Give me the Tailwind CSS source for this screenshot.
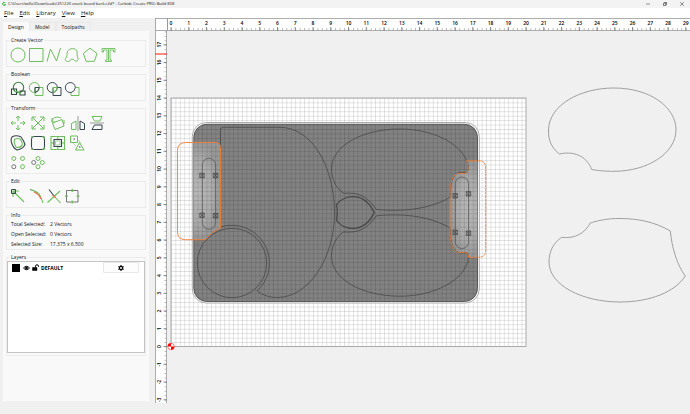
<!DOCTYPE html>
<html lang="en">
<head>
<meta charset="utf-8">
<title>Carbide Create PRO</title>
<script src="https://cdn.jsdelivr.net/npm/@tailwindcss/browser@4"></script>
</head>
<body class="flex h-screen flex-col overflow-hidden bg-[#f0f0f0] font-['Open_Sans',sans-serif] text-[5px] leading-[8px] font-medium text-[#111]">
<header>
  <div class="flex h-[8px] items-center bg-[#f3f3f3] pl-[2px] pr-[6px] text-[4px]">
    <svg class="mr-[2px] size-[4px]" viewBox="0 0 8 8" fill="none" stroke="#35b135" stroke-width="2"><path d="M6.5 1.8A3 3 0 1 0 7 5H4.5"/></svg>
    <h1 class="grow">C:\Users\willa\Downloads\251220 snack board back.c2d* - Carbide Create PRO: Build 838</h1>
    <div class="flex gap-[13px]">
      <button aria-label="Minimize"><svg class="size-[4px]" viewBox="0 0 4 4" stroke="#555" stroke-width=".6"><path d="M0 2h4"/></svg></button>
      <button aria-label="Restore"><svg class="size-[4px]" viewBox="0 0 4 4" fill="none" stroke="#222" stroke-width=".6"><path d="M.4 1.2h2.4v2.4H.4zM1.2.4h2.4v2.4"/></svg></button>
      <button aria-label="Close"><svg class="size-[4px]" viewBox="0 0 4 4" stroke="#444" stroke-width=".6"><path d="M.2.2l3.6 3.6M3.8.2L.2 3.8"/></svg></button>
    </div>
  </div>
  <nav class="flex h-[10px] items-center gap-[6px] bg-white pl-[4px] text-[6px]">
    <button><u>F</u>ile</button><button><u>E</u>dit</button><button><u>L</u>ibrary</button><button><u>V</u>iew</button><button><u>H</u>elp</button>
  </nav>
</header>

<main class="flex min-h-0 grow">
  <aside class="flex w-[152px] shrink-0 flex-col pt-[4px] pr-[3px] pb-[13px] pl-[3px]">
    <div role="tablist" class="flex h-[9px]">
      <button role="tab" aria-selected="true" class="bg-[#f9f9f9] px-[5px]">Design</button>
      <button role="tab" class="border-x border-t border-[#e9e9e9] px-[5px]">Model</button>
      <button role="tab" class="border-x border-t border-[#e9e9e9] px-[5px]">Toolpaths</button>
    </div>
    <div class="flex grow flex-col gap-[3px] bg-[#f9f9f9] px-[3px] pt-[5px]">
      <fieldset class="border border-[#ebebeb] px-[3px] pb-[3px]">
        <legend class="px-px">Create Vector</legend>
        <div class="flex gap-[2px] pt-[3px]">
          <button aria-label="Circle"><svg class="size-4" viewBox="0 0 16 16" fill="none" stroke="#6cbf5c"><circle cx="8" cy="8" r="7"/></svg></button>
          <button aria-label="Rectangle"><svg class="size-4" viewBox="0 0 16 16" fill="none" stroke="#6cbf5c"><path d="M1.500 1.500h13.500v13h-13.500z"/></svg></button>
          <button aria-label="Polyline"><svg class="size-4" viewBox="0 0 16 16" fill="none" stroke="#6cbf5c"><path d="M1 14.500L4.500 2l6 12L14.500 1"/></svg></button>
          <button aria-label="Curve"><svg class="size-4" viewBox="0 0 16 16" fill="none" stroke="#6cbf5c"><path d="M3.500 14.500C0 14 1.500 11.500 2.500 10C3.500 8 2.500 7 3.500 4.500C5 .800 12 .500 13 4.500C13.500 7 12.500 8.500 14 11C15 13.500 12 15 10.500 13.500C9 11.500 7 12 6.500 13C6 14.300 5 14.600 3.500 14.500z"/></svg></button>
          <button aria-label="Polygon"><svg class="size-4" viewBox="0 0 16 16" fill="none" stroke="#6cbf5c"><path d="M8 1.200L15 6.500L12.400 14.300H4.200L1.300 6.500z"/></svg></button>
          <button aria-label="Text"><svg class="size-4" viewBox="0 0 16 16" fill="none" stroke="#6cbf5c" stroke-width=".9"><path d="M2 1.500H15V5H13.500V3H10V13H11.500V14.500H5.500V13H7V3H3.500V5H2zM8.500 2V14"/></svg></button>
        </div>
      </fieldset>
      <fieldset class="border border-[#ebebeb] px-[3px] pb-[3px]">
        <legend class="px-px">Boolean</legend>
        <div class="flex gap-[2px] pt-[3px]">
          <button aria-label="Union"><svg class="size-4" viewBox="0 0 16 16" fill="none" stroke="#3a7d43" stroke-width="1.100"><circle cx="8.500" cy="6.500" r="5.200"/><path d="M1.500 8h5v5.500h-5zM10 10h5v4h-5z" stroke="#2e4a3c"/><path d="M4 10.500h4L11 13" stroke="#6cbf5c"/></svg></button>
          <button aria-label="Subtract"><svg class="size-4" viewBox="0 0 16 16" fill="none" stroke="#6cbf5c"><circle cx="6.300" cy="6.500" r="5"/><path d="M7 6.500h8v8h-8z"/><path d="M7 11.500V6.500h4.300Q11 10.500 7 11.500" stroke="#37474f"/></svg></button>
          <button aria-label="Intersect"><svg class="size-4" viewBox="0 0 16 16" fill="none" stroke="#37474f"><circle cx="6.300" cy="6.500" r="5"/><path d="M7 6.500h8v8h-8z"/><path d="M7 11.500V6.500h4.300Q11 10.500 7 11.500" stroke="#6cbf5c"/></svg></button>
          <button aria-label="Exclude"><svg class="size-4" viewBox="0 0 16 16" fill="none" stroke="#6cbf5c"><path d="M11.300 6.500H15v8H7v-3"/><path d="M7 11.500A5 5 0 1 1 11.300 6.500Q11 10.500 7 11.500" stroke="#46545c"/></svg></button>
        </div>
      </fieldset>
      <fieldset class="border border-[#ebebeb] px-[3px] pb-[2px]">
        <legend class="px-px">Transform</legend>
        <div class="grid grid-cols-[repeat(5,16px)] gap-[4px] pt-[3px]">
          <button aria-label="Move"><svg class="size-4" viewBox="0 0 16 16" fill="none" stroke="#6cbf5c"><path d="M8 1v5M8 10v5M1 8h5M10 8h5M6 3l2-2 2 2M6 13l2 2 2-2M3 6L1 8l2 2M13 6l2 2-2 2"/></svg></button>
          <button aria-label="Scale"><svg class="size-4" viewBox="0 0 16 16" fill="none" stroke="#6cbf5c"><path d="M2 2l12 12M14 2L2 14M2 6V2h4M10 2h4v4M14 10v4h-4M6 14H2v-4"/></svg></button>
          <button aria-label="Rotate"><svg class="size-4" viewBox="0 0 16 16" fill="none" stroke="#6cbf5c"><path d="M2.500 8L12 4.500L14 11L5 14.500zM2 7C1.500 2.500 7 1 11 3M2 3v4h3M14 5v4"/></svg></button>
          <button aria-label="Mirror horizontally"><svg class="size-4" viewBox="0 0 16 16" fill="none" stroke="#6cbf5c"><path d="M1.500 14.500V8.500L6 6v8.500z"/><path d="M14.500 14.500V8.500L10 6v8.500z" stroke="#37474f"/><path d="M8 1v15" stroke="#999"/></svg></button>
          <button aria-label="Mirror vertically"><svg class="size-4" viewBox="0 0 16 16" fill="none" stroke="#6cbf5c"><path d="M2 1.500H12L10 6H4.500z"/><path d="M2 14.500H12V10H4.500z" stroke="#37474f"/><path d="M0 8h14" stroke="#999"/></svg></button>
          <button aria-label="Offset"><svg class="size-4" viewBox="0 0 16 16" fill="none" stroke="#37474f" stroke-width="1.100"><path d="M2 2Q6-.500 11 2Q14 6 15 9.500Q13 14 7 15Q3 13 1.500 7.500Q.500 4 2 2z"/><path d="M4.500 4.500Q8 2.500 10.500 4.500Q13 8 12 10.500Q9 13.500 6 12Q3.500 7.500 4.500 4.500z" stroke="#6cbf5c"/></svg></button>
          <button aria-label="Fillet"><svg class="size-4" viewBox="0 0 16 16" fill="none" stroke="#37474f" stroke-width="1.100"><rect x="1.500" y="1.500" width="13" height="13" rx="2.500"/><path d="M1.500 4V1.500H4M12 1.500h2.500V4M14.500 12v2.500H12M4 14.500H1.500V12" stroke="#6cbf5c" stroke-width=".7"/></svg></button>
          <button aria-label="Align"><svg class="size-4" viewBox="0 0 16 16" fill="none" stroke="#6cbf5c" stroke-width="1.100"><path d="M1 1.500h13.500v13h-13.500zM7.800 1.500v13M1 8h13.500"/><path d="M4 4.500h7.500v7h-7.500z" stroke="#37474f" fill="#f9f9f9"/><path d="M5.500 6h4.500v4h-4.500z" stroke-width=".6"/></svg></button>
          <button aria-label="Group"><svg class="size-4" viewBox="0 0 16 16" fill="none" stroke="#6cbf5c"><path d="M.500 1h7v6.500H.500zM9.500 7.500L14 15H5.500z"/><path d="M3.500 4h1.500M9 12h1.500" stroke="#37474f"/><path d="M8 5L11 8M3 8L6 11" stroke-width=".5"/></svg></button>
          <span></span>
          <button aria-label="Linear array"><svg class="size-4" viewBox="0 0 16 16" fill="none" stroke="#6cbf5c"><circle cx="3.800" cy="3.500" r="2"/><circle cx="12.500" cy="3.500" r="2"/><circle cx="12.500" cy="11.700" r="2"/><circle cx="3.800" cy="11.700" r="2" stroke="#777"/></svg></button>
          <button aria-label="Circular array"><svg class="size-4" viewBox="0 0 16 16" fill="none" stroke="#6cbf5c"><circle cx="8" cy="3.500" r="2"/><circle cx="12.300" cy="7.500" r="2"/><circle cx="8" cy="11.700" r="2"/><circle cx="3.700" cy="7.500" r="2" stroke="#777"/></svg></button>
        </div>
      </fieldset>
      <fieldset class="border border-[#ebebeb] px-[3px] pb-[3px]">
        <legend class="px-px">Edit</legend>
        <div class="flex gap-[2px] pt-[3px]">
          <button aria-label="Node edit"><svg class="size-4" viewBox="0 0 16 16" fill="none" stroke="#6cbf5c"><path d="M14 14L3 3M3 9V3h6" stroke-width="1.100"/><path d="M1.500 1.500h4v4h-4z" stroke="#37474f"/></svg></button>
          <button aria-label="Smooth curve"><svg class="size-4" viewBox="0 0 16 16" fill="none" stroke="#6cbf5c"><path d="M2 1.500Q12 3 15 15M2 1.500L10 4.500L13 9"/><path d="M6 4Q11 6 13 11" stroke="#f06a4a" stroke-width="1.200"/></svg></button>
          <button aria-label="Trim"><svg class="size-4" viewBox="0 0 16 16" fill="none" stroke="#6cbf5c" stroke-width="1.100"><path d="M1.500 14.500L14 3M8 8l6.500 7"/><path d="M3 1.500L8 8" stroke="#37474f"/><path d="M6.500 7L9.500 9.500" stroke="#f06a4a"/></svg></button>
          <button aria-label="Join vectors"><svg class="size-4" viewBox="0 0 16 16" fill="none" stroke="#777"><path d="M2.500 2.500h11.500v11.500h-11.500z"/><path d="M8.200 1v3M8.200 12.500v3M1 8.200h3M12.500 8.200h3" stroke="#6cbf5c" stroke-width="1.300"/></svg></button>
        </div>
      </fieldset>
      <fieldset class="border border-[#ebebeb] px-[3px]">
        <legend class="px-px">Info</legend>
        <dl class="grid grid-cols-[39px_1fr] pl-px leading-[10px]">
          <dt>Total Selected:</dt><dd>2 Vectors</dd>
          <dt>Open Selected:</dt><dd>0 Vectors</dd>
          <dt>Selected Size:</dt><dd>17.375 x 6.500</dd>
        </dl>
      </fieldset>
      <fieldset class="mb-[45px] flex grow flex-col border border-[#ebebeb] pb-[2px]">
        <legend class="ml-[3px] px-px">Layers</legend>
        <div class="h-full border border-[#c4c4c4] bg-white">
          <div class="flex items-center pr-[5px] pl-[4px]">
            <span class="mr-[3px] size-[8px] bg-black"></span>
            <button class="mr-[2px]" aria-label="Toggle visibility"><svg class="h-[6px] w-[7px]" viewBox="0 0 14 12" fill="none" stroke="#000" stroke-width="1.800"><path d="M1 6Q7-1 13 6Q7 13 1 6z"/><circle cx="7" cy="6" r="2" fill="#000"/></svg></button>
            <button class="mr-[2px]" aria-label="Toggle lock"><svg class="h-[7px] w-[7px]" viewBox="0 0 14 14" fill="none" stroke="#000" stroke-width="2"><path d="M7 7V4.500Q7 1.500 10 1.500T13 4.500V6"/><path d="M1 7h9v6H1z" fill="#000" stroke-width="1"/></svg></button>
            <span class="grow font-bold text-black">DEFAULT</span>
            <button class="flex h-[11px] w-[36px] items-center justify-center rounded-[1px] border border-[#e8e8e8] bg-[#fdfdfd]" aria-label="Layer settings"><svg class="size-[6px]" viewBox="0 0 12 12" fill="none" stroke="#000"><circle cx="6" cy="6" r="3.200" stroke-width="2.400"/><path d="M6 0v2M6 10v2M.8 3l1.700 1M9.500 8l1.700 1M.8 9l1.700-1M9.500 4l1.700-1" stroke-width="2.200"/></svg></button>
          </div>
        </div>
      </fieldset>
    </div>
  </aside>

  <section class="ml-[3px] flex min-w-0 grow flex-col" aria-label="Drawing area">
    <div class="flex h-[13px] shrink-0 bg-white">
      <div class="w-[12px] shrink-0 border-t border-l border-b border-[#aaa]"></div>
      <svg id="hruler" class="h-full min-w-0 grow text-[5px] font-semibold">
        <defs><pattern id="ht" x="4" y="0" width="4.4375" height="13" patternUnits="userSpaceOnUse"><path d="M.3 10v3" stroke="#777" stroke-width=".6"/></pattern></defs>
        <rect width="100%" height="100%" fill="url(#ht)"/><path d="M0 .5H4000M0 12.500H4000" stroke="#999" stroke-width=".8"/><path d="M.5 0V13" stroke="#999"/>
      </svg>
    </div>
    <div class="flex min-h-0 grow">
      <div class="w-[12px] shrink-0 pb-[11px]">
      <svg id="vruler" class="h-full w-full bg-white text-[5px] font-semibold">
        <defs><pattern id="vt" x="0" y="315.500" width="12" height="4.4375" patternUnits="userSpaceOnUse"><path d="M9.500 .3h2.500" stroke="#777" stroke-width=".6"/></pattern></defs>
        <rect width="100%" height="100%" fill="url(#vt)"/><path d="M.5 0V4000M11.500 0V4000" stroke="#999" stroke-width=".8"/><path d="M0 23H12" stroke="#ff3b30" stroke-width="1.200"/>
      </svg>
      </div>
      <svg class="h-full min-w-0 grow" fill="none" role="img" aria-label="Snack board drawing">
        <defs>
          <pattern id="grid" x="171" y="98" width="4.4375" height="4.4375" patternUnits="userSpaceOnUse"><path d="M0 .25H4.500M.25 0V4.500" stroke="#000" stroke-opacity=".26" stroke-width=".5"/></pattern>
          <clipPath id="board"><rect x="193.500" y="124" width="284" height="177.500" rx="13"/></clipPath>
          <radialGradient id="glow"><stop offset="0" stop-color="#b8b8b8"/><stop offset=".6" stop-color="#acacac"/><stop offset="1" stop-color="#989898"/></radialGradient>
          <path id="lh" d="M185.500 142.500H215Q220.500 142.500 220.500 147.500V228Q212 231 205.500 239.700H185.500Q177.500 239.700 177.500 231.700V150.500Q177.500 142.500 185.500 142.500z"/>
          <path id="rh" d="M466.700 160.700H478.500Q485.700 160.700 485.700 168V250Q485.700 257.300 478.500 257.300H468.500Q468.500 252.500 464 252.500H459Q450 252.500 450 228V197Q450 173.300 459 173.300H465Q470 173 466.700 160.700z"/>
          <g id="pin"><path d="M-2.200-2.200h4.400v4.400h-4.400zM-2.200-2.200l4.400 4.400M2.200-2.200l-4.400 4.400"/></g>
          <path id="oval" d="M450 197.300C437 205 418 210.300 395 210.300C388 210.300 382 210.100 376 209.300C371 201 362 193.200 351 193.200H343.300C336 188 331.500 179 331.500 169C331.500 146 362 129 400 129C431 129 459 142 466.700 160.700Q470 168 467 172.500H459Q450.500 173 450 197.300z"/>
        </defs>
        <g transform="translate(-167 -31)">
          <rect x="171" y="98" width="355" height="248.500" fill="#fff"/>
          <rect x="171" y="98" width="355" height="248.500" fill="url(#grid)"/>
          <rect x="192.300" y="122.500" width="287" height="180.500" rx="14" fill="#fff" stroke="#888" stroke-width=".7"/>
          <rect x="193.800" y="124.200" width="283.700" height="177.300" rx="13" fill="#828282" stroke="#444" stroke-width=".8"/>
          <g clip-path="url(#board)">
            <g fill="url(#glow)"><use href="#lh"/><use href="#rh"/></g>
            <rect x="171" y="98" width="355" height="248.500" fill="url(#grid)"/>
          </g>
          <rect x="171" y="98" width="355" height="248.500" stroke="#aaa"/>
          <g stroke="#484848" stroke-width=".8">
            <path d="M220.500 226.500V130Q220.500 127.300 223.200 127.300H280C312 127.300 334.500 167 334.500 213C334.500 258 309 297.500 277 297.500Q266 297.500 257 291A37.700 37.700 0 0 0 220.500 227"/>
            <circle cx="232" cy="263" r="34.700"/>
            <use href="#oval"/><use href="#oval" transform="translate(0 425.200) scale(1 -1)"/>
            <path d="M336.700 204.500C344 194.500 364 191 374.200 212.600C364 234 344 230.500 336.700 220.700Q338 212.600 336.700 204.500z" stroke-width="1.300"/>
            <rect x="202.300" y="158.300" width="13.300" height="71" rx="6.650" stroke="#5a5a5a"/>
            <rect x="455.300" y="177" width="13.300" height="71.500" rx="6.650" stroke="#5a5a5a"/>
          </g>
          <g stroke="#333" stroke-width=".6">
            <use href="#pin" x="202" y="175.500"/><use href="#pin" x="215.500" y="175.500"/><use href="#pin" x="202" y="215.200"/><use href="#pin" x="215.500" y="215.700"/>
            <use href="#pin" x="455.200" y="195.800"/><use href="#pin" x="468.500" y="193.800"/><use href="#pin" x="455.200" y="232.200"/><use href="#pin" x="468.500" y="233.200"/>
          </g>
          <use href="#lh" stroke="#f08037" stroke-width=".9"/>
          <use href="#rh" stroke="#f08037" stroke-width=".9" stroke-dasharray="3 .6"/>
          <g stroke="#8c8c8c" stroke-width=".8">
            <path d="M559.300 154C551 147 548.300 140 548.500 130C549 105 580 88 614 88C650 88 676 107 676 130C676 153 648 171.300 614 171.300C604 171.300 597 170.500 591.700 169.500C588 159 577 150 559.300 154z"/>
            <path d="M561.700 237.300C553 243 549 252 549 262C549 285 582 302 620 302C650 302 675 292 685.300 276C677 265 672 248 670.300 231C655 222 638 218.500 620 218.500C608 218.500 600 220 590.300 223C585 233 575 239 561.700 237.300z"/>
          </g>
          <circle cx="171" cy="346.500" r="3.300" fill="#fff" stroke="#f00" stroke-width=".5"/>
          <path d="M171 346.500V343.200A3.300 3.300 0 0 0 167.700 346.500zM171 346.500V349.800A3.300 3.300 0 0 0 174.300 346.500z" fill="#f00"/>
        </g>
      </svg>
    </div>
  </section>
</main>
<script>
  // Ruler labels and inch ticks; one inch is 17.75px at this zoom level.
  const NS = 'http://www.w3.org/2000/svg', INCH = 17.75;
  function add(svg, tag, attrs, text) {
    const el = document.createElementNS(NS, tag);
    for (const k in attrs) el.setAttribute(k, attrs[k]);
    if (text !== undefined) el.textContent = text;
    svg.appendChild(el);
  }
  const h = document.getElementById('hruler'), v = document.getElementById('vruler');
  for (let i = 0; i <= 29; i++) {
    const x = 4 + i * INCH;
    add(h, 'path', { d: `M${x} 9V13`, stroke: '#777', 'stroke-width': '.8' });
    add(h, 'text', { x, y: 7, 'text-anchor': 'middle', fill: '#000' }, i);
  }
  for (let i = -3; i <= 17; i++) {
    const y = 315.5 - i * INCH;
    add(v, 'path', { d: `M8.500 ${y}H12`, stroke: '#777', 'stroke-width': '.8' });
    add(v, 'text', { transform: `translate(6 ${y}) rotate(-90)`, 'text-anchor': 'middle', fill: '#000' }, i);
  }
</script>
</body>
</html>
